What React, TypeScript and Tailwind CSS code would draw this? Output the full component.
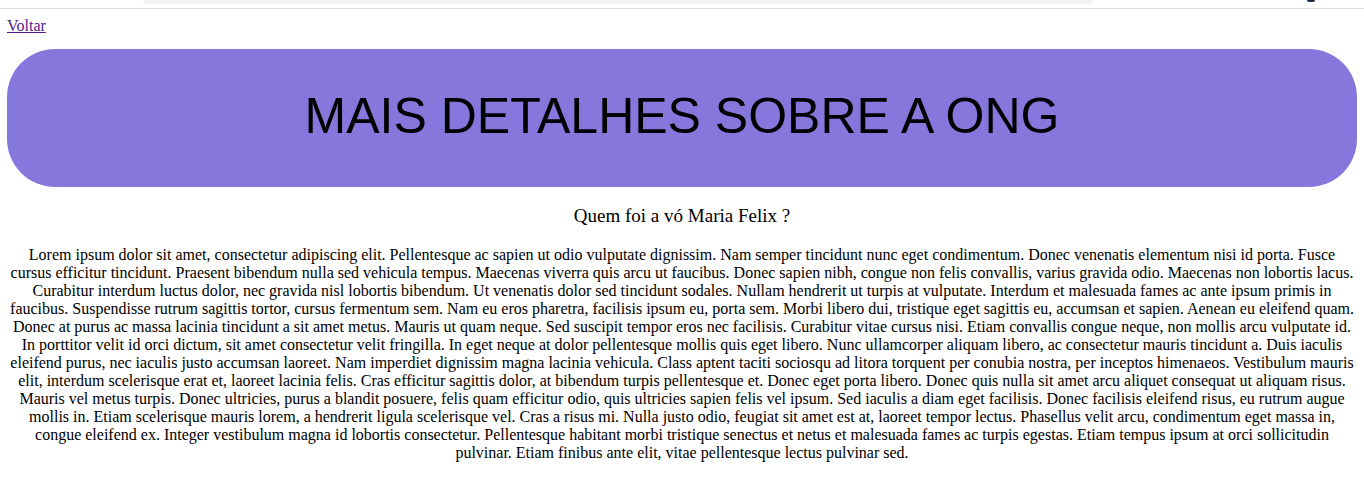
import React from "react";

const paragraph =
  "Lorem ipsum dolor sit amet, consectetur adipiscing elit. Pellentesque ac sapien ut odio vulputate dignissim. Nam semper tincidunt nunc eget condimentum. Donec venenatis elementum nisi id porta. Fusce cursus efficitur tincidunt. Praesent bibendum nulla sed vehicula tempus. Maecenas viverra quis arcu ut faucibus. Donec sapien nibh, congue non felis convallis, varius gravida odio. Maecenas non lobortis lacus. Curabitur interdum luctus dolor, nec gravida nisl lobortis bibendum. Ut venenatis dolor sed tincidunt sodales. Nullam hendrerit ut turpis at vulputate. Interdum et malesuada fames ac ante ipsum primis in faucibus. Suspendisse rutrum sagittis tortor, cursus fermentum sem. Nam eu eros pharetra, facilisis ipsum eu, porta sem. Morbi libero dui, tristique eget sagittis eu, accumsan et sapien. Aenean eu eleifend quam. Donec at purus ac massa lacinia tincidunt a sit amet metus. Mauris ut quam neque. Sed suscipit tempor eros nec facilisis. Curabitur vitae cursus nisi. Etiam convallis congue neque, non mollis arcu vulputate id. In porttitor velit id orci dictum, sit amet consectetur velit fringilla. In eget neque at dolor pellentesque mollis quis eget libero. Nunc ullamcorper aliquam libero, ac consectetur mauris tincidunt a. Duis iaculis eleifend purus, nec iaculis justo accumsan laoreet. Nam imperdiet dignissim magna lacinia vehicula. Class aptent taciti sociosqu ad litora torquent per conubia nostra, per inceptos himenaeos. Vestibulum mauris elit, interdum scelerisque erat et, laoreet lacinia felis. Cras efficitur sagittis dolor, at bibendum turpis pellentesque et. Donec eget porta libero. Donec quis nulla sit amet arcu aliquet consequat ut aliquam risus. Mauris vel metus turpis. Donec ultricies, purus a blandit posuere, felis quam efficitur odio, quis ultricies sapien felis vel ipsum. Sed iaculis a diam eget facilisis. Donec facilisis eleifend risus, eu rutrum augue mollis in. Etiam scelerisque mauris lorem, a hendrerit ligula scelerisque vel. Cras a risus mi. Nulla justo odio, feugiat sit amet est at, laoreet tempor lectus. Phasellus velit arcu, condimentum eget massa in, congue eleifend ex. Integer vestibulum magna id lobortis consectetur. Pellentesque habitant morbi tristique senectus et netus et malesuada fames ac turpis egestas. Etiam tempus ipsum at orci sollicitudin pulvinar. Etiam finibus ante elit, vitae pellentesque lectus pulvinar sed.";

export default function App() {
  return (
    <div className="min-h-screen bg-white text-black font-['Liberation_Serif','Times_New_Roman',serif]">
      {/* browser chrome remnant */}
      <div className="h-[9px] border-b border-[#dadce0] flex items-start">
        <div className="ml-[143px] w-[950px] h-[4px] bg-[#f1f3f4] rounded-b-[8px]" />
        <div className="ml-[214px] w-[8px] h-[2px] bg-[#1f2a3a] rounded-b-full" />
      </div>

      <div className="px-[7px]">
        <div className="mt-[8px] text-[16px] leading-[18px]">
          <a href="#" className="text-[#551a8b] underline">
            Voltar
          </a>
        </div>

        <div className="mt-[14px] h-[138px] rounded-[48px] bg-[#8677dd] flex items-center justify-center">
          <h1 className="font-['Liberation_Sans',Arial,sans-serif] text-[50px] leading-none font-normal text-black -mt-[4px]">
            MAIS DETALHES SOBRE A ONG
          </h1>
        </div>

        <h2 className="mt-[18px] text-center text-[19px] leading-[22px] font-normal">
          Quem foi a vó Maria Felix ?
        </h2>

        <p className="mt-[19px] text-center text-[16px] leading-[18px]">
          {paragraph}
        </p>
      </div>
    </div>
  );
}
